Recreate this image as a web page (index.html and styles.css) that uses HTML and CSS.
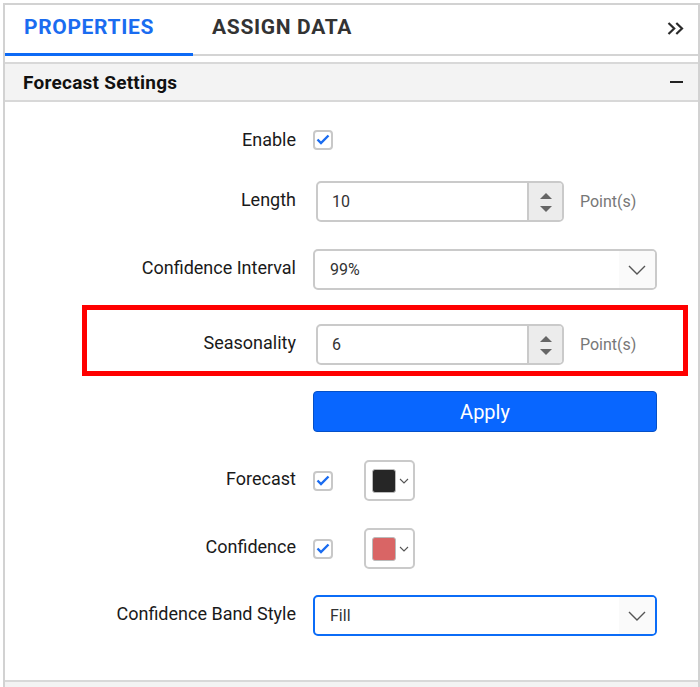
FILE: index.html
```html
<!DOCTYPE html>
<html lang="en">

<head>
    <meta charset="UTF-8">
    <meta name="viewport" content="width=device-width, initial-scale=1.0">
    <title>Forecast Settings</title>
    <link rel="stylesheet" href="styles.css">
</head>

<body>
    <div class="panel">
        <div class="tabs">
            <div class="tab active">PROPERTIES</div>
            <div class="tab">ASSIGN DATA</div>
            <div class="collapse">
                <svg width="17" height="13" viewBox="0 0 17 13">
                    <path d="M1.5 1 L7.2 6.5 L1.5 12 M9.3 1 L15 6.5 L9.3 12" fill="none" stroke="#2b2b2b" stroke-width="2.2"/>
                </svg>
            </div>
        </div>

        <div class="section-header">
            <span>Forecast Settings</span>
            <span class="minus"></span>
        </div>

        <div class="form">
            <div class="row row-enable">
                <label class="label">Enable</label>
                <div class="control">
                    <span class="check"><svg width="14" height="11" viewBox="0 0 14 11"><path d="M1.5 5.5 L5 9 L12.5 1.5" fill="none" stroke="#1a6cf0" stroke-width="2.4"/></svg></span>
                </div>
            </div>

            <div class="row row-length">
                <label class="label">Length</label>
                <div class="control">
                    <div class="numeric">
                        <span class="numeric-value">10</span>
                        <span class="spin"><span class="up"></span><span class="down"></span></span>
                    </div>
                    <span class="unit">Point(s)</span>
                </div>
            </div>

            <div class="row row-interval">
                <label class="label">Confidence Interval</label>
                <div class="control">
                    <div class="dropdown">
                        <span class="dropdown-value">99%</span>
                        <span class="arrow"><svg width="18" height="10" viewBox="0 0 18 10"><path d="M1 1 L9 9 L17 1" fill="none" stroke="#555" stroke-width="1.4"/></svg></span>
                    </div>
                </div>
            </div>

            <div class="row row-highlight">
                <label class="label">Seasonality</label>
                <div class="control">
                    <div class="numeric">
                        <span class="numeric-value">6</span>
                        <span class="spin"><span class="up"></span><span class="down"></span></span>
                    </div>
                    <span class="unit">Point(s)</span>
                </div>
            </div>

            <div class="row row-apply">
                <span class="label"></span>
                <div class="control">
                    <button class="apply" type="button">Apply</button>
                </div>
            </div>

            <div class="row">
                <label class="label">Forecast</label>
                <div class="control">
                    <span class="check"><svg width="14" height="11" viewBox="0 0 14 11"><path d="M1.5 5.5 L5 9 L12.5 1.5" fill="none" stroke="#1a6cf0" stroke-width="2.4"/></svg></span>
                    <div class="picker">
                        <span class="swatch swatch-dark"></span>
                        <svg width="10" height="6" viewBox="0 0 10 6"><path d="M1 1 L5 5 L9 1" fill="none" stroke="#555" stroke-width="1.1"/></svg>
                    </div>
                </div>
            </div>

            <div class="row row-confidence">
                <label class="label">Confidence</label>
                <div class="control">
                    <span class="check"><svg width="14" height="11" viewBox="0 0 14 11"><path d="M1.5 5.5 L5 9 L12.5 1.5" fill="none" stroke="#1a6cf0" stroke-width="2.4"/></svg></span>
                    <div class="picker">
                        <span class="swatch swatch-red"></span>
                        <svg width="10" height="6" viewBox="0 0 10 6"><path d="M1 1 L5 5 L9 1" fill="none" stroke="#555" stroke-width="1.1"/></svg>
                    </div>
                </div>
            </div>

            <div class="row row-last">
                <label class="label">Confidence Band Style</label>
                <div class="control">
                    <div class="dropdown focused">
                        <span class="dropdown-value">Fill</span>
                        <span class="arrow"><svg width="18" height="10" viewBox="0 0 18 10"><path d="M1 1 L9 9 L17 1" fill="none" stroke="#555" stroke-width="1.4"/></svg></span>
                    </div>
                </div>
            </div>
        </div>

        <div class="next-section"></div>
    </div>
</body>

</html>
```

FILE: styles.css
```css
* {
    margin: 0;
    padding: 0;
    box-sizing: border-box;
}

body {
    font-family: Roboto, "Liberation Sans", Arial, sans-serif;
    background: #fff;
    color: #222;
    padding-top: 3px;
    overflow: hidden;
}

.panel {
    width: 697px;
    margin-left: 3px;
    border: 2px solid #d2d2d2;
    border-bottom: none;
    background: #fff;
}

/* Tabs */
.tabs {
    display: flex;
    align-items: flex-start;
    border-bottom: 2px solid #d4d4d4;
    height: 51px;
}

.tab {
    position: relative;
    padding: 8px 19px 0;
    height: 49px;
    font-size: 21px;
    font-weight: 700;
    line-height: 28px;
    letter-spacing: 0.65px;
    color: #333;
}

.tab.active {
    padding-right: 39px;
    color: #1a6cf0;
}

.tab.active::after {
    content: "";
    position: absolute;
    left: 0;
    right: 0;
    bottom: -2px;
    height: 3px;
    background: #0d6af5;
}

.collapse {
    margin-left: auto;
    padding: 15px 14px 0 0;
}

/* Section header */
.section-header {
    display: flex;
    justify-content: space-between;
    align-items: center;
    margin-top: 6px;
    height: 40px;
    padding: 0 15px 0 18px;
    background: #f3f3f3;
    border-top: 2px solid #d8d8d8;
    border-bottom: 2px solid #d8d8d8;
    font-size: 19px;
    font-weight: 700;
    letter-spacing: 0.25px;
    color: #111;
}

.minus {
    width: 13px;
    height: 2px;
    background: #222;
}

/* Form */
.form {
    padding: 17px 0 44px;
}

.row {
    display: flex;
    align-items: center;
    height: 41px;
    margin-bottom: 27px;
}

.row-enable {
    margin-bottom: 21px;
}

.row-interval {
    margin-bottom: 34px;
}

.row-highlight {
    position: relative;
    margin-bottom: 26px;
}

.row-highlight::after {
    content: "";
    position: absolute;
    left: 77px;
    right: 10px;
    top: -19px;
    bottom: -11px;
    border: 5px solid #ff0000;
    pointer-events: none;
}

.row-apply {
    margin-bottom: 28px;
}

.row-confidence {
    margin-bottom: 26px;
}

.row-last {
    margin-bottom: 0;
}

.label {
    width: 291px;
    text-align: right;
    font-size: 18px;
    color: #1a1a1a;
    padding-bottom: 4px;
}

.row-enable .label {
    padding-bottom: 0;
}

.control {
    display: flex;
    align-items: center;
    margin-left: 17px;
}

.check {
    display: flex;
    align-items: center;
    justify-content: center;
    width: 20px;
    height: 20px;
    border: 2px solid #c8c8c8;
    border-radius: 4px;
    background: #fff;
}

.numeric {
    display: flex;
    width: 248px;
    height: 41px;
    margin-left: 3px;
    border: 2px solid #cacaca;
    border-radius: 5px;
    overflow: hidden;
}

.numeric-value {
    flex: 1;
    padding-left: 14px;
    font-size: 16px;
    line-height: 37px;
    color: #333;
}

.spin {
    display: flex;
    flex-direction: column;
    align-items: center;
    justify-content: space-between;
    width: 35px;
    padding: 10px 0 8px;
    background: #ececec;
    border-left: 2px solid #cacaca;
}

.up {
    width: 0;
    height: 0;
    border-left: 6px solid transparent;
    border-right: 6px solid transparent;
    border-bottom: 6px solid #666;
}

.down {
    width: 0;
    height: 0;
    border-left: 6px solid transparent;
    border-right: 6px solid transparent;
    border-top: 6px solid #666;
}

.unit {
    margin-left: 16px;
    font-size: 16px;
    color: #777;
}

.dropdown {
    display: flex;
    align-items: center;
    width: 344px;
    height: 41px;
    border: 2px solid #cacaca;
    border-radius: 5px;
    overflow: hidden;
}

.dropdown.focused {
    border-color: #0b6cf7;
}

.dropdown-value {
    flex: 1;
    padding-left: 15px;
    font-size: 16px;
    color: #333;
}

.arrow {
    display: flex;
    align-items: center;
    justify-content: center;
    width: 36px;
    height: 100%;
    background: #fafafa;
}

.apply {
    width: 344px;
    height: 41px;
    border: 1px solid #0450c8;
    border-radius: 4px;
    background: #0866ff;
    color: #fff;
    font-family: Roboto, "Liberation Sans", Arial, sans-serif;
    font-size: 20px;
}

.picker {
    display: flex;
    align-items: center;
    gap: 3px;
    width: 51px;
    height: 41px;
    margin-left: 31px;
    padding-left: 6px;
    border: 2px solid #cacaca;
    border-radius: 5px;
}

.swatch {
    width: 24px;
    height: 24px;
    border: 1px solid #bbb;
    border-radius: 3px;
}

.swatch-dark {
    background: #262626;
}

.swatch-red {
    background: #d96565;
}

.next-section {
    height: 20px;
    background: #f3f3f3;
    border-top: 2px solid #d8d8d8;
}
```
